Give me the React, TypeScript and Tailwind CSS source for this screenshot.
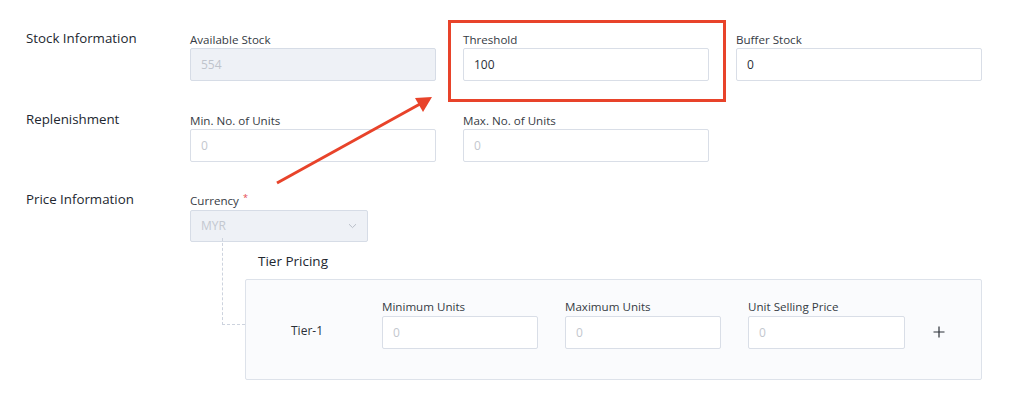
import React from "react";

const font = { fontFamily: '"Open Sans", "Noto Sans", sans-serif' };

function Field({
  label,
  value,
  disabled,
  placeholder,
}: {
  label: string;
  value?: string;
  disabled?: boolean;
  placeholder?: string;
}) {
  return (
    <div className="flex flex-col">
      <div className="h-4 text-[11.6px] leading-4 text-[#363b44]">{label}</div>
      <div
        className={
          "flex h-[33px] items-center rounded-[2px] border px-[10px] text-[12px] " +
          (disabled
            ? "border-[#d6dce6] bg-[#eef1f6] text-[#bfc4cc]"
            : "border-[#d9dee7] bg-white " + (placeholder ? "text-[#c3c7ce]" : "text-[#2b3038]"))
        }
      >
        {value ?? placeholder}
      </div>
    </div>
  );
}

function TierField({ label }: { label: string }) {
  return (
    <div className="flex flex-col">
      <div className="h-[17px] text-[11.6px] leading-4 text-[#363b44]">{label}</div>
      <div className="flex h-[33px] items-center rounded-[2px] border border-[#d9dee7] bg-white px-[10px] text-[12px] text-[#c3c7ce]">
        0
      </div>
    </div>
  );
}

export default function App() {
  return (
    <div className="relative h-[394px] w-[1013px] overflow-hidden bg-white pl-[26px] pt-[32px]" style={font}>
      {/* Stock Information */}
      <div className="flex">
        <div className="-mt-[2px] w-[164px] text-[13.3px] leading-4 text-[#22272f]">Stock Information</div>
        <div className="grid grid-cols-[246px_246px_246px] gap-x-[27px]">
          <Field label="Available Stock" value="554" disabled />
          <Field label="Threshold" value="100" />
          <Field label="Buffer Stock" value="0" />
        </div>
      </div>

      {/* Replenishment */}
      <div className="mt-[32px] flex">
        <div className="-mt-[2px] w-[164px] text-[13.3px] leading-4 text-[#22272f]">Replenishment</div>
        <div className="grid grid-cols-[246px_246px] gap-x-[27px]">
          <Field label="Min. No. of Units" placeholder="0" />
          <Field label="Max. No. of Units" placeholder="0" />
        </div>
      </div>

      {/* Price Information */}
      <div className="mt-[31px] flex">
        <div className="-mt-[2px] w-[164px] text-[13.3px] leading-4 text-[#22272f]">Price Information</div>
        <div className="relative flex flex-col">
          <div className="h-[17px] text-[11.6px] leading-4 text-[#363b44]">
            Currency
            <span className="relative -top-[4px] ml-[4px] text-[9px] text-[#e5484d]">*</span>
          </div>
          <div className="flex h-[32px] w-[178px] items-center justify-between rounded-[2px] border border-[#d6dce6] bg-[#eef1f6] pl-[10px] pr-[10px] text-[12px] text-[#c3c8d0]">
            <span>MYR</span>
            <svg width="9" height="6" viewBox="0 0 9 6" fill="none">
              <path d="M1 1.2 4.5 4.6 8 1.2" stroke="#b8bec8" strokeWidth="1" />
            </svg>
          </div>
          {/* dashed connector */}
          <div className="absolute left-[32px] top-[45px] h-[87px] w-[23px] border-b border-l border-dashed border-[#cdd3de]" />

          <div className="mt-[9px] pl-[68px] text-[13.5px] leading-5 text-[#22272f]">Tier Pricing</div>
          <div className="relative ml-[55px] mt-[8px] flex h-[101px] w-[737px] rounded-[2px] border border-[#dde2ea] bg-[#fafbfd] pt-[19px]">
            <div className="flex w-[136px] items-start pl-[45px] pt-[24px] text-[12px] leading-4 text-[#2b3038]">
              Tier-1
            </div>
            <div className="grid grid-cols-[156px_156px_157px] gap-x-[27px]">
              <TierField label="Minimum Units" />
              <TierField label="Maximum Units" />
              <TierField label="Unit Selling Price" />
            </div>
            <div className="ml-[24px] mt-[23px] flex h-5 w-5 items-center justify-center">
              <svg width="12" height="12" viewBox="0 0 12 12">
                <path d="M6 0.5v11M0.5 6h11" stroke="#2b3038" strokeWidth="1.2" />
              </svg>
            </div>
          </div>
        </div>
      </div>

      {/* annotation overlays */}
      <div className="pointer-events-none absolute left-[448px] top-[20px] h-[82px] w-[278px] border-[3px] border-[#e8432a]" />
      <svg className="pointer-events-none absolute left-0 top-0" width="1013" height="394">
        <line x1="277" y1="183" x2="420" y2="104" stroke="#e8432a" strokeWidth="3" />
        <polygon points="432,97 415,98 423,112" fill="#e8432a" />
      </svg>
    </div>
  );
}
